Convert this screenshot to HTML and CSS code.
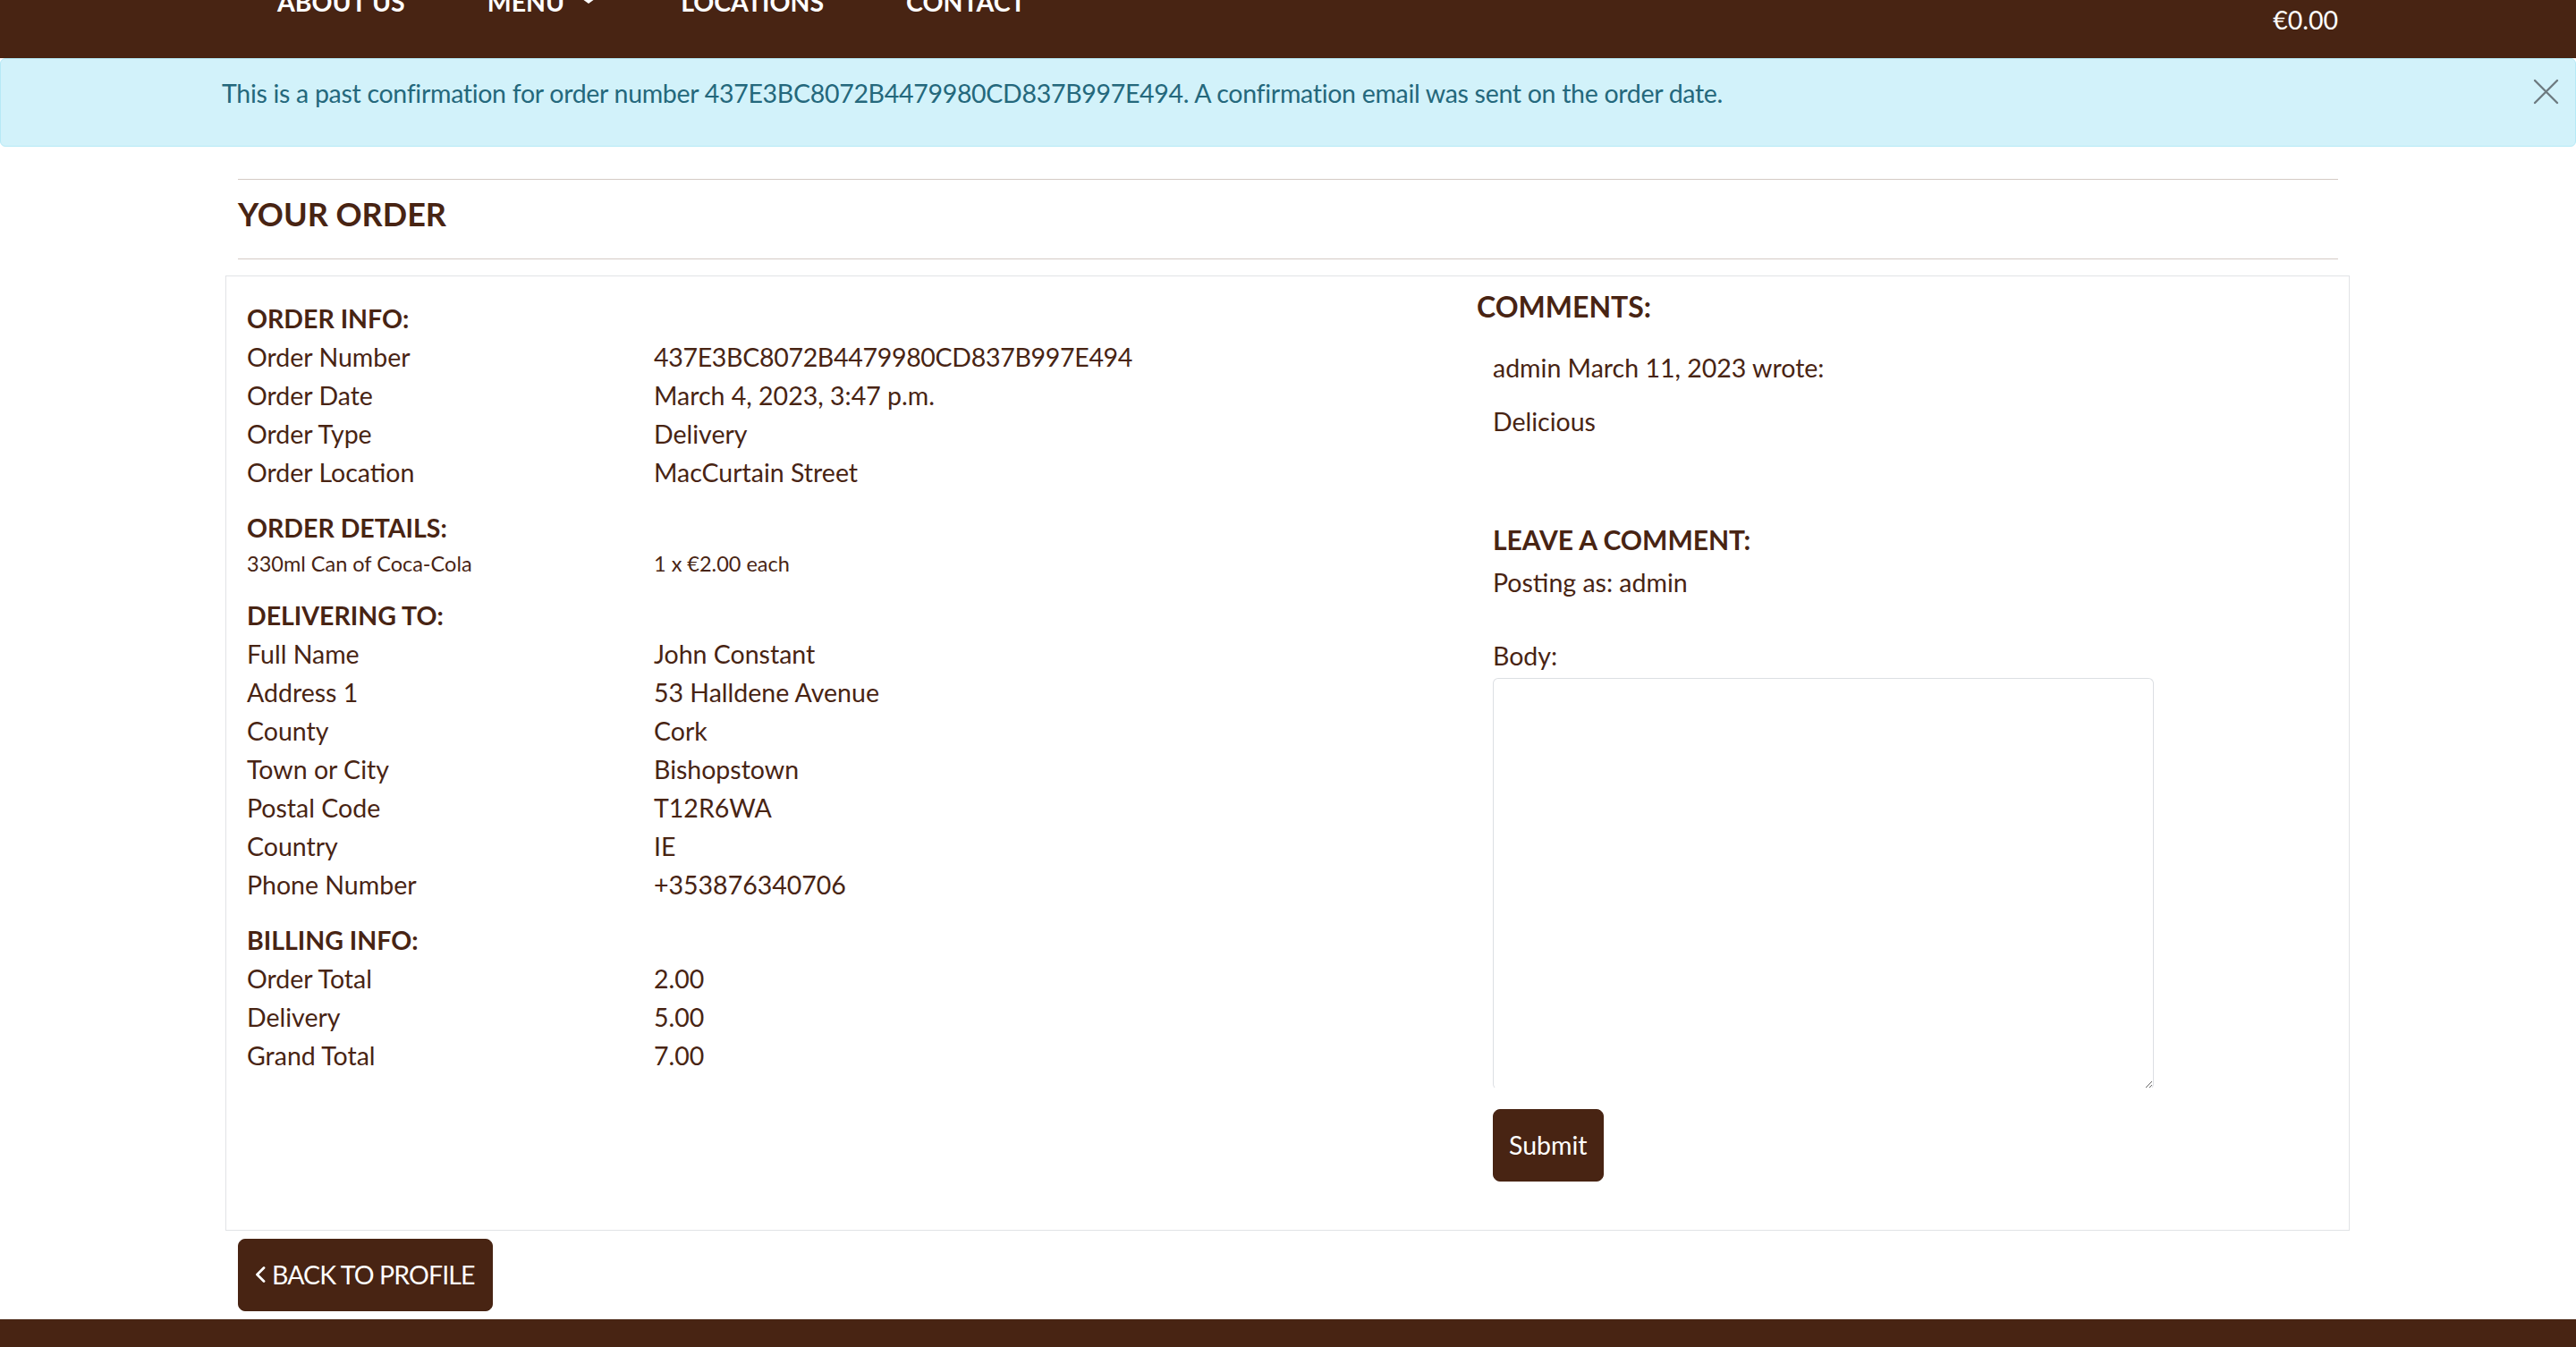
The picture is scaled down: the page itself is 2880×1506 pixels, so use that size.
FILE: index.html
```html
<!DOCTYPE html>
<html lang="en">
<head>
<meta charset="utf-8">
<title>Your Order</title>
<link rel="stylesheet" href="styles.css">
</head>
<body>
<header class="site-nav">
  <ul class="nav-links">
    <li>ABOUT US</li>
    <li>MENU<span class="caret"></span></li>
    <li>LOCATIONS</li>
    <li>CONTACT</li>
  </ul>
  <div class="cart">€0.00</div>
</header>

<div class="alert">
  <p class="alert-text">This is a past confirmation for order number 437E3BC8072B4479980CD837B997E494. A confirmation email was sent on the order date.</p>
  <button class="btn-close" type="button" aria-label="Close">
    <svg width="29" height="29" viewBox="0 0 29 29"><path d="M2 2 L27 27 M27 2 L2 27" stroke="#6e7b80" stroke-width="2.4" fill="none" stroke-linecap="round"/></svg>
  </button>
</div>

<main class="container">
  <hr class="rule rule-top">
  <h2 class="page-title">YOUR ORDER</h2>
  <hr class="rule rule-bottom">

  <section class="order-card">
    <div class="order-col">
      <div class="info-section">
        <div class="info-heading">ORDER INFO:</div>
        <span>Order Number</span><span class="code">437E3BC8072B4479980CD837B997E494</span>
        <span>Order Date</span><span>March 4, 2023, 3:47 p.m.</span>
        <span>Order Type</span><span>Delivery</span>
        <span>Order Location</span><span>MacCurtain Street</span>
      </div>
      <div class="info-section">
        <div class="info-heading">ORDER DETAILS:</div>
        <span class="small-row">330ml Can of Coca-Cola</span><span class="small-row">1 x €2.00 each</span>
      </div>
      <div class="info-section">
        <div class="info-heading">DELIVERING TO:</div>
        <span>Full Name</span><span>John Constant</span>
        <span>Address 1</span><span>53 Halldene Avenue</span>
        <span>County</span><span>Cork</span>
        <span>Town or City</span><span>Bishopstown</span>
        <span>Postal Code</span><span>T12R6WA</span>
        <span>Country</span><span>IE</span>
        <span>Phone Number</span><span>+353876340706</span>
      </div>
      <div class="info-section">
        <div class="info-heading">BILLING INFO:</div>
        <span>Order Total</span><span>2.00</span>
        <span>Delivery</span><span>5.00</span>
        <span>Grand Total</span><span>7.00</span>
      </div>
    </div>

    <div class="comments-col">
      <h3 class="comments-title">COMMENTS:</h3>
      <div class="comment-body">
        <p class="comment-author">admin March 11, 2023 wrote:</p>
        <p class="comment-text">Delicious</p>
        <h3 class="leave-title">LEAVE A COMMENT:</h3>
        <p class="posting-as">Posting as: admin</p>
        <form class="comment-form">
          <label class="body-label" for="body">Body:</label>
          <textarea id="body" class="body-input"></textarea>
          <button type="button" class="btn btn-submit">Submit</button>
        </form>
      </div>
    </div>
  </section>

  <a class="btn btn-back" href="#">
    <svg width="12" height="18" viewBox="0 0 12 18"><polyline points="10,1.5 2.5,9 10,16.5" fill="none" stroke="#ffffff" stroke-width="2.8" stroke-linecap="round" stroke-linejoin="round"/></svg>
    <span class="back-label">BACK TO PROFILE</span>
  </a>
</main>

<footer class="site-footer"></footer>
</body>
</html>
```

FILE: styles.css
```css
* {
  box-sizing: border-box;
}

html, body {
  margin: 0;
  padding: 0;
  overflow: hidden;
}

body {
  font-family: "Lato", "Open Sans", sans-serif;
  font-size: 28.5px;
  line-height: 43px;
  color: #482413;
  background: #ffffff;
}

/* ---------- navbar ---------- */
.site-nav {
  height: 65px;
  background: #482413;
  display: flex;
  justify-content: space-between;
  align-items: flex-start;
  padding: 0 266px;
  overflow: hidden;
}

.nav-links {
  list-style: none;
  margin: -19.5px 0 0 0;
  padding: 0 0 0 44px;
  display: flex;
  gap: 92px;
  color: #ffffff;
  font-weight: 700;
  line-height: 43px;
}

.caret {
  display: inline-block;
  width: 0;
  height: 0;
  margin-left: 16px;
  border-top: 8px solid #ffffff;
  border-left: 11px solid transparent;
  border-right: 11px solid transparent;
  vertical-align: 9px;
}

.cart {
  color: #ffffff;
  line-height: 43px;
  padding-top: 1px;
}

/* ---------- alert ---------- */
.alert {
  display: flex;
  align-items: flex-start;
  background: #d2f2fa;
  border: 1px solid #b6e9f6;
  border-radius: 6px;
  padding: 16.5px 18px 37.5px 247px;
}

.alert-text {
  margin: 0;
  color: #24687c;
  line-height: 43px;
  letter-spacing: -0.3px;
}

.btn-close {
  margin: 5px 0 0 auto;
  padding: 0;
  border: 0;
  background: transparent;
  width: 29px;
  height: 29px;
  display: flex;
}

/* ---------- main ---------- */
.container {
  width: 2348px;
  margin: 0 auto;
}

.rule {
  margin: 0;
  border: 0;
  border-top: 1px solid #d4cac5;
  height: 0;
}

.rule-top {
  margin-top: 36px;
}

.page-title {
  margin: 16.5px 0 0 0;
  font-size: 36px;
  line-height: 43.2px;
  font-weight: 700;
}

.rule-bottom {
  margin-top: 28.3px;
}

.order-card {
  margin: 18px -13px 0 -14px;
  border: 1px solid #e1e3e6;
  display: grid;
  grid-template-columns: 1384px 1fr;
}

.order-col {
  padding: 25.5px 0 0 23px;
}

.info-section {
  display: grid;
  grid-template-columns: 455px 1fr;
  line-height: 43px;
  margin-bottom: 19px;
}

.info-heading {
  grid-column: 1 / 3;
  font-weight: 700;
}

.code {
  letter-spacing: -0.3px;
}

.small-row {
  font-size: 23.5px;
  line-height: 36.75px;
}

/* ---------- comments ---------- */
.comments-col {
  padding: 15.4px 0 54px 14px;
}

.comments-title {
  margin: 0;
  font-size: 32px;
  line-height: 38.4px;
  font-weight: 700;
}

.comment-body {
  margin-left: 18px;
}

.comment-author {
  margin: 27.7px 0 0 0;
}

.comment-text {
  margin: 17px 0 0 0;
}

.leave-title {
  margin: 91.9px 0 0 0;
  font-size: 30px;
  line-height: 36px;
  font-weight: 700;
}

.posting-as {
  margin: 9.1px 0 0 0;
}

.comment-form {
  margin: 39px 0 0 0;
  display: flex;
  flex-direction: column;
  align-items: flex-start;
}

.body-label {
  display: block;
}

.body-input {
  margin-top: 2.5px;
  width: 739px;
  height: 460px;
  border: 1px solid #dcdfe3;
  border-bottom-color: transparent;
  border-radius: 6px;
  font-family: inherit;
  font-size: 28.5px;
  background: #ffffff;
}

.btn {
  display: inline-flex;
  align-items: center;
  background: #482413;
  color: #ffffff;
  border: 1px solid #482413;
  border-radius: 8px;
  font-family: inherit;
  font-size: 28.5px;
  line-height: 42.75px;
  text-decoration: none;
}

.btn-submit {
  margin-top: 22px;
  padding: 18.1px 17px;
}

.btn-back {
  margin: 9px 0;
  padding: 18.1px 19px 18.1px 18px;
  gap: 7px;
}

.back-label {
  letter-spacing: -0.9px;
}

/* ---------- footer ---------- */
.site-footer {
  height: 31px;
  background: #482413;
}
```
